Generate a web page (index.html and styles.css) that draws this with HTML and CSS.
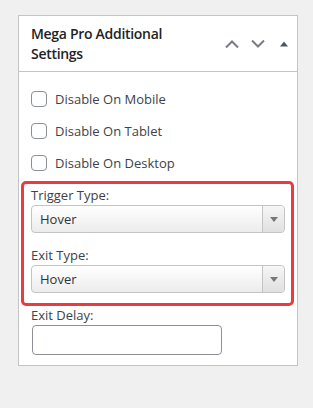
FILE: index.html
```html
<!DOCTYPE html>
<html lang="en">
<head>
    <meta charset="UTF-8">
    <meta name="viewport" content="width=device-width, initial-scale=1.0">
    <title>Mega Pro Additional Settings</title>
    <link rel="stylesheet" href="styles.css">
</head>
<body>
    <div class="postbox">
        <div class="postbox-header">
            <h2 class="postbox-title">Mega Pro Additional Settings</h2>
            <div class="handle-actions">
                <svg class="chevron" width="14" height="8" viewBox="0 0 14 8"><path d="M1 7.5 L7 1.5 L13 7.5" fill="none" stroke="#787c82" stroke-width="2"/></svg>
                <svg class="chevron" width="14" height="8" viewBox="0 0 14 8"><path d="M1 0.5 L7 6.5 L13 0.5" fill="none" stroke="#787c82" stroke-width="2"/></svg>
                <svg class="toggle" width="8" height="6" viewBox="0 0 8 6"><path d="M0 5.5 L4 0.5 L8 5.5 Z" fill="#50575e"/></svg>
            </div>
        </div>
        <div class="postbox-body">
            <label class="check-row"><span class="checkbox"></span>Disable On Mobile</label>
            <label class="check-row"><span class="checkbox"></span>Disable On Tablet</label>
            <label class="check-row"><span class="checkbox"></span>Disable On Desktop</label>

            <div class="highlight">
                <div class="field">
                    <div class="field-label">Trigger Type:</div>
                    <div class="select">
                        <span class="select-value">Hover</span>
                        <span class="select-arrow"></span>
                    </div>
                </div>
                <div class="field">
                    <div class="field-label">Exit Type:</div>
                    <div class="select">
                        <span class="select-value">Hover</span>
                        <span class="select-arrow"></span>
                    </div>
                </div>
            </div>

            <div class="field delay">
                <div class="field-label">Exit Delay:</div>
                <div class="text-input"></div>
            </div>
        </div>
    </div>
</body>
</html>
```

FILE: styles.css
```css
body {
    font-family: "Open Sans", "Noto Sans", sans-serif;
    background-color: #f0f0f1;
    margin: 0;
    padding: 15px 0 0 18px;
    color: #3c434a;
}
.postbox {
    width: 278px;
    background-color: #ffffff;
    border: 1px solid #c3c4c7;
}
.postbox-header {
    display: flex;
    justify-content: space-between;
    align-items: center;
    border-bottom: 1px solid #c3c4c7;
    height: 55px;
}
.postbox-title {
    margin: 0;
    padding: 0 12px;
    font-size: 14px;
    font-weight: 600;
    line-height: 20px;
    letter-spacing: -0.3px;
    color: #1d2327;
    width: 160px;
}
.handle-actions {
    display: flex;
    align-items: center;
    padding-right: 9px;
    margin-top: 1px;
}
.chevron {
    margin-left: 12px;
}
.toggle {
    margin-left: 15px;
}
.postbox-body {
    display: flex;
    flex-direction: column;
    padding: 19px 12px 10px 12px;
}
.check-row {
    display: flex;
    align-items: center;
    height: 16px;
    margin-bottom: 16px;
    font-size: 13px;
    color: #3c434a;
}
.checkbox {
    width: 14px;
    height: 14px;
    border: 1px solid #8c8f94;
    border-radius: 4px;
    margin-right: 8px;
}
.highlight {
    margin: -6px -9px 0 -10px;
    border: 3px solid #ec3a41;
    border-radius: 5px;
    padding: 3px 6px 10px 7px;
}
.field-label {
    font-size: 13px;
    line-height: 17px;
    color: #3c434a;
}
.field + .field {
    margin-top: 14px;
}
.select {
    display: flex;
    height: 26px;
    margin-top: 1px;
    border: 1px solid #c4c4c4;
    border-radius: 4px;
    background: linear-gradient(#ffffff, #ececec);
}
.select-value {
    flex: 1;
    padding-left: 8px;
    font-size: 13px;
    line-height: 26px;
    color: #333333;
}
.select-arrow {
    width: 21px;
    border-left: 1px solid #c4c4c4;
    background: linear-gradient(#f6f6f6, #e0e0e0);
    border-radius: 0 4px 4px 0;
    position: relative;
}
.select-arrow::after {
    content: "";
    position: absolute;
    left: 7px;
    top: 11px;
    border-left: 4px solid transparent;
    border-right: 4px solid transparent;
    border-top: 5px solid #777777;
}
.delay {
    margin-top: 1px;
}
.text-input {
    width: 188px;
    height: 28px;
    margin-top: 1px;
    margin-left: 1px;
    border: 1px solid #8c8f94;
    border-radius: 4px;
}
```
